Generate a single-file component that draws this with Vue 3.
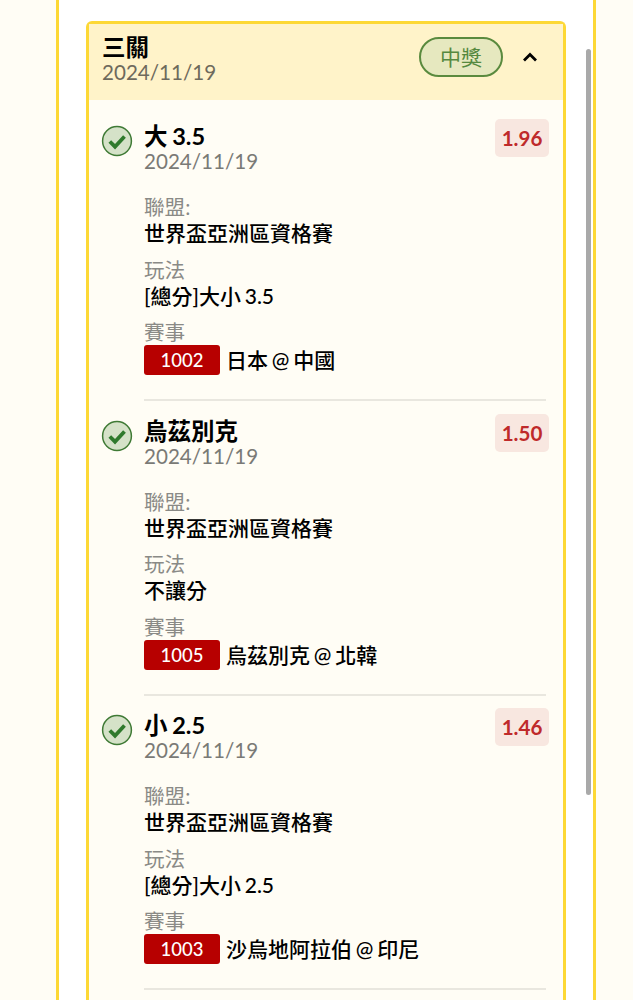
<template>
  <div class="page">
    <div class="panel">
      <div class="scrollbar" />
      <div class="parlay">
        <div class="parlay-head">
          <div>
            <p class="parlay-name">三關</p>
            <p class="parlay-date">2024/11/19</p>
          </div>
          <div class="head-right">
            <span class="status">中獎</span>
            <svg class="chevron" width="16" height="16" viewBox="0 0 16 16">
              <path d="M2 11.5 8 5.5 14 11.5" fill="none" stroke="#000" stroke-width="2.8" />
            </svg>
          </div>
        </div>

        <div class="legs">
          <div v-for="leg in legs" :key="leg.code" class="leg">
            <svg class="check" width="32" height="32" viewBox="0 0 32 32">
              <circle cx="16" cy="16" r="14.4" fill="#d5e2c8" stroke="#3f7a35" stroke-width="1.5" />
              <path d="M8.8 16.5 14 21.7 23.5 11.5" fill="none" stroke="#2f7a2c" stroke-width="3.8" />
            </svg>
            <div class="leg-body">
              <div class="leg-top">
                <div>
                  <p class="leg-name">{{ leg.name }}</p>
                  <p class="leg-date">2024/11/19</p>
                </div>
                <span class="odds">{{ leg.odds }}</span>
              </div>
              <p class="label first">聯盟:</p>
              <p class="value">世界盃亞洲區資格賽</p>
              <p class="label">玩法</p>
              <p class="value">{{ leg.play }}</p>
              <p class="label">賽事</p>
              <div class="match">
                <span class="code">{{ leg.code }}</span>
                <span class="value">{{ leg.match }}</span>
              </div>
            </div>
          </div>
        </div>
      </div>
    </div>
  </div>
</template>

<script setup>
const legs = [
  { name: "大 3.5", odds: "1.96", play: "[總分]大小 3.5", code: "1002", match: "日本 @ 中國" },
  { name: "烏茲別克", odds: "1.50", play: "不讓分", code: "1005", match: "烏茲別克 @ 北韓" },
  { name: "小 2.5", odds: "1.46", play: "[總分]大小 2.5", code: "1003", match: "沙烏地阿拉伯 @ 印尼" },
];
</script>

<style>
html,
body {
  background: #fffdf5;
  overflow: hidden;
}
</style>

<style scoped>
p {
  margin: 0;
}

.page {
  height: 1000px;
  overflow: hidden;
  padding: 0 37px 0 56px;
  box-sizing: border-box;
  font-family: Lato, "Noto Sans CJK TC", sans-serif;
  color: #000;
}

.panel {
  position: relative;
  height: 100%;
  box-sizing: border-box;
  padding: 21px 27px 0 27px;
  border-left: 3px solid #fdd835;
  border-right: 3px solid #fdd835;
  background: #fff;
}

.scrollbar {
  position: absolute;
  top: 49px;
  right: 2px;
  width: 5px;
  height: 746px;
  border-radius: 3px;
  background: #a9a9a9;
}

.parlay {
  height: 1100px;
  border: 3px solid #fdd835;
  border-bottom: 0;
  border-radius: 6px 6px 0 0;
  background: #fffdf5;
}

.parlay-head {
  display: flex;
  justify-content: space-between;
  align-items: flex-start;
  height: 76px;
  padding: 10px 25px 0 13px;
  box-sizing: border-box;
  background: #fff3c9;
}

.parlay-name {
  font-size: 23.5px;
  line-height: 27px;
  font-weight: 700;
}

.parlay-date {
  font-size: 20.6px;
  line-height: 23px;
  color: #6e6a5c;
}

.head-right {
  display: flex;
  align-items: center;
  gap: 19px;
  margin-top: 3px;
}

.status {
  width: 84px;
  height: 40px;
  box-sizing: border-box;
  border: 2px solid #5a8a3e;
  border-radius: 20px;
  background: #e6e8bf;
  color: #55893f;
  font-size: 21px;
  line-height: 36px;
  text-align: center;
}

.legs {
  padding: 0 14px;
}

.leg {
  display: flex;
  gap: 11px;
  height: 294.5px;
  padding-top: 18px;
  box-sizing: border-box;
}

.check {
  flex: none;
  margin: 7px 0 0 -2px;
}

.leg-body {
  flex: 1;
  height: 281px;
  border-bottom: 2px solid #e9e7df;
  margin-right: 3px;
}

.leg-top {
  display: flex;
  justify-content: space-between;
  align-items: flex-start;
  margin-right: -3px;
}

.leg-name {
  font-size: 23.5px;
  line-height: 26px;
  font-weight: 700;
  margin-top: 5px;
  word-spacing: -1px;
}

.leg-date {
  font-size: 20.6px;
  line-height: 24px;
  color: #7a7a76;
}

.odds {
  width: 54px;
  height: 38px;
  margin-top: 1px;
  border-radius: 5px;
  background: #f8e7e0;
  color: #bf2a2a;
  font-size: 20.6px;
  font-weight: 700;
  line-height: 38px;
  text-align: center;
}

.label {
  font-size: 20.6px;
  line-height: 26px;
  margin-top: 10.5px;
  color: #8a8a86;
}

.label.first {
  margin-top: 21px;
}

.value {
  font-size: 21px;
  line-height: 26px;
  font-weight: 500;
  word-spacing: -1.5px;
}

.match {
  display: flex;
  align-items: center;
  gap: 6px;
  height: 30px;
}

.code {
  width: 76px;
  height: 30px;
  border-radius: 3px;
  background: #b70000;
  color: #fff;
  font-size: 18.5px;
  font-weight: 500;
  line-height: 30px;
  text-align: center;
}
</style>
